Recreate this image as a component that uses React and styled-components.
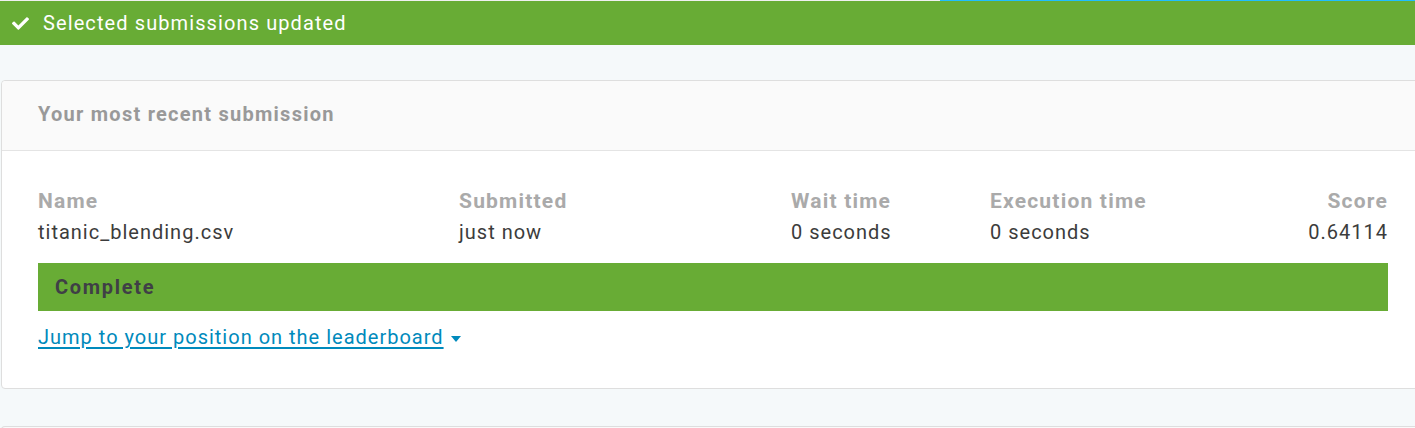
import React from "react";
import styled, { createGlobalStyle } from "styled-components";
import { FaCheck } from "react-icons/fa";

const Global = createGlobalStyle`
  html, body { margin: 0; padding: 0; background: #f5f9fa; }
  body { font-family: Roboto, "Liberation Sans", Arial, sans-serif; overflow: hidden; }
  #root { overflow: hidden; }
`;

const Page = styled.div`
  width: 100%;
  min-height: 428px;
  background: #f5f9fa;
  overflow: hidden;
`;

const TopLine = styled.div`
  display: flex;
  height: 1px;
`;

const Segment = styled.div`
  height: 1px;
  background: ${(p) => p.$color};
  ${(p) => (p.$w ? `width: ${p.$w}px;` : "flex: 1;")}
`;

const Banner = styled.div`
  display: flex;
  align-items: center;
  height: 44px;
  background: #68ac35;
  color: #fff;
  padding-left: 12px;
  gap: 14px;
  font-size: 20px;
  letter-spacing: 1.1px;
`;

const Main = styled.div`
  padding: 35px 0 0 1px;
`;

const Card = styled.div`
  margin-right: -10px;
  background: #fff;
  border: 1px solid #dedede;
  border-radius: 4px;
  margin-bottom: 37px;
`;

const NextCard = styled.div`
  margin-right: -10px;
  height: 10px;
  background: #fafafa;
  border: 1px solid #dedede;
  border-bottom: none;
  border-radius: 4px 4px 0 0;
`;

const CardHeader = styled.div`
  height: 66px;
  padding: 0 36px 3px 36px;
  display: flex;
  align-items: center;
  background: #fafafa;
  border-bottom: 1px solid #e4e4e4;
  border-radius: 4px 4px 0 0;
  color: #999;
  font-weight: 700;
  font-size: 20px;
  letter-spacing: 1.25px;
`;

const CardBody = styled.div`
  padding: 35px 36px 36px 36px;
`;

const Grid = styled.div`
  display: grid;
  grid-template-columns: 421px 332px 199px 1fr auto;
  font-size: 20px;
  line-height: 30px;
`;

const Cell = styled.div`
  text-align: ${(p) => (p.$right ? "right" : "left")};
`;

const Label = styled.div`
  color: #aaa;
  font-weight: 700;
  font-size: 21px;
  letter-spacing: 1.2px;
`;

const Value = styled.div`
  color: #3c3c3c;
  letter-spacing: 1px;
  margin-top: 1px;
`;

const StatusBar = styled.div`
  margin-top: 16px;
  height: 48px;
  display: flex;
  align-items: center;
  padding-left: 17px;
  background: #68ac35;
  color: #3f3f46;
  font-weight: 700;
  font-size: 20px;
  letter-spacing: 1.7px;
`;

const LinkRow = styled.div`
  margin-top: 11px;
  line-height: 30px;
  font-size: 20px;
  letter-spacing: 1px;
`;

const Link = styled.a`
  color: #008abc;
  text-decoration: underline;
  text-underline-offset: 3px;
  cursor: pointer;
`;

const Caret = styled.span`
  display: inline-block;
  width: 0;
  height: 0;
  margin-left: 7px;
  vertical-align: middle;
  border-left: 5px solid transparent;
  border-right: 5px solid transparent;
  border-top: 6px solid #008abc;
`;

const columns = [
  { label: "Name", value: "titanic_blending.csv" },
  { label: "Submitted", value: "just now" },
  { label: "Wait time", value: "0 seconds" },
  { label: "Execution time", value: "0 seconds" },
  { label: "Score", value: "0.64114", right: true },
];

export default function App() {
  return (
    <Page>
      <Global />
      <TopLine>
        <Segment $color="#f0f0f0" $w={940} />
        <Segment $color="#20beff" />
      </TopLine>
      <Banner>
        <FaCheck size={17} />
        <span>Selected submissions updated</span>
      </Banner>
      <Main>
        <Card>
          <CardHeader>Your most recent submission</CardHeader>
          <CardBody>
            <Grid>
              {columns.map((c) => (
                <Cell key={c.label} $right={c.right}>
                  <Label>{c.label}</Label>
                  <Value>{c.value}</Value>
                </Cell>
              ))}
            </Grid>
            <StatusBar>Complete</StatusBar>
            <LinkRow>
              <Link>
                Jump to your position on the leaderboard<Caret />
              </Link>
            </LinkRow>
          </CardBody>
        </Card>
        <NextCard />
      </Main>
    </Page>
  );
}
